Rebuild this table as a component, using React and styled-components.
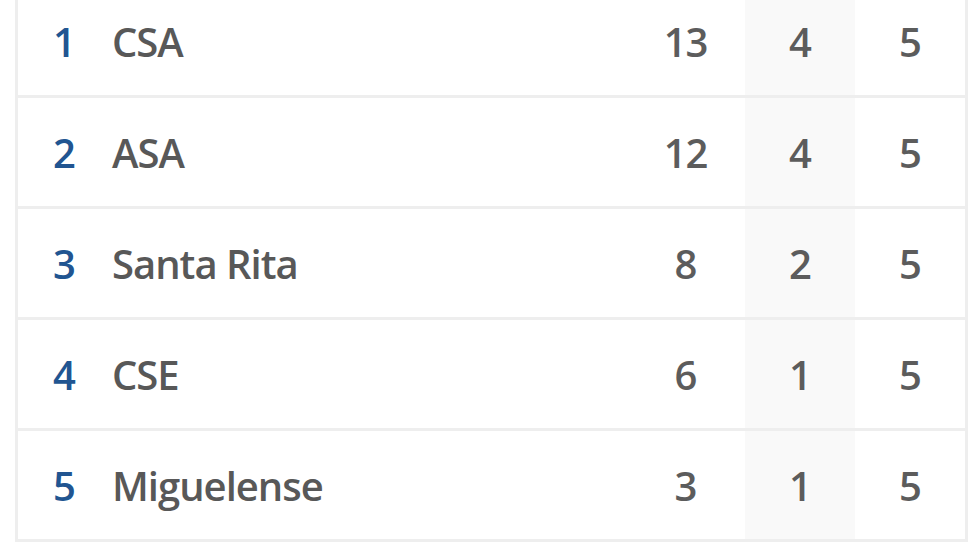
import styled, { createGlobalStyle } from 'styled-components'

const Global = createGlobalStyle`
    html, body {
        margin: 0;
        padding: 0;
        background: #ffffff;
        overflow: hidden;
    }
`

const Tabela = styled.div`
    width: 947px;
    margin: -13px 0 0 15px;
    border-left: 3px solid #eeeeee;
    border-right: 3px solid #eeeeee;
    font-family: "Open Sans", "Liberation Sans", sans-serif;
    font-size: 40px;
    font-weight: 600;
    letter-spacing: -1px;
`

const Linha = styled.div`
    display: grid;
    grid-template-columns: 1fr 113px 110px 110px;
    height: 108px;
    border-bottom: 3px solid #eeeeee;
`

const Celula = styled.div`
    display: flex;
    align-items: center;
    justify-content: ${props => props.$centro ? 'center' : 'flex-start'};
    background: ${props => props.$destaque ? '#f9f9f9' : 'transparent'};
    color: #5c5c5c;
    padding-right: ${props => props.$recuo || 0}px;
`

const Posicao = styled.span`
    width: 59px;
    padding-left: 35px;
    color: #215591;
`

const Time = styled.span`
    color: #585858;
`

const classificacao = [
    { pos: 1, time: 'CSA', pontos: 13, vitorias: 4, jogos: 5 },
    { pos: 2, time: 'ASA', pontos: 12, vitorias: 4, jogos: 5 },
    { pos: 3, time: 'Santa Rita', pontos: 8, vitorias: 2, jogos: 5 },
    { pos: 4, time: 'CSE', pontos: 6, vitorias: 1, jogos: 5 },
    { pos: 5, time: 'Miguelense', pontos: 3, vitorias: 1, jogos: 5 },
]

function App() {
    return (
        <>
            <Global />
            <Tabela>
                {classificacao.map(item => (
                    <Linha key={item.pos}>
                        <Celula>
                            <Posicao>{item.pos}</Posicao>
                            <Time>{item.time}</Time>
                        </Celula>
                        <Celula $centro $recuo={6}>{item.pontos}</Celula>
                        <Celula $centro $destaque>{item.vitorias}</Celula>
                        <Celula $centro>{item.jogos}</Celula>
                    </Linha>
                ))}
            </Tabela>
        </>
    )
}

export default App
